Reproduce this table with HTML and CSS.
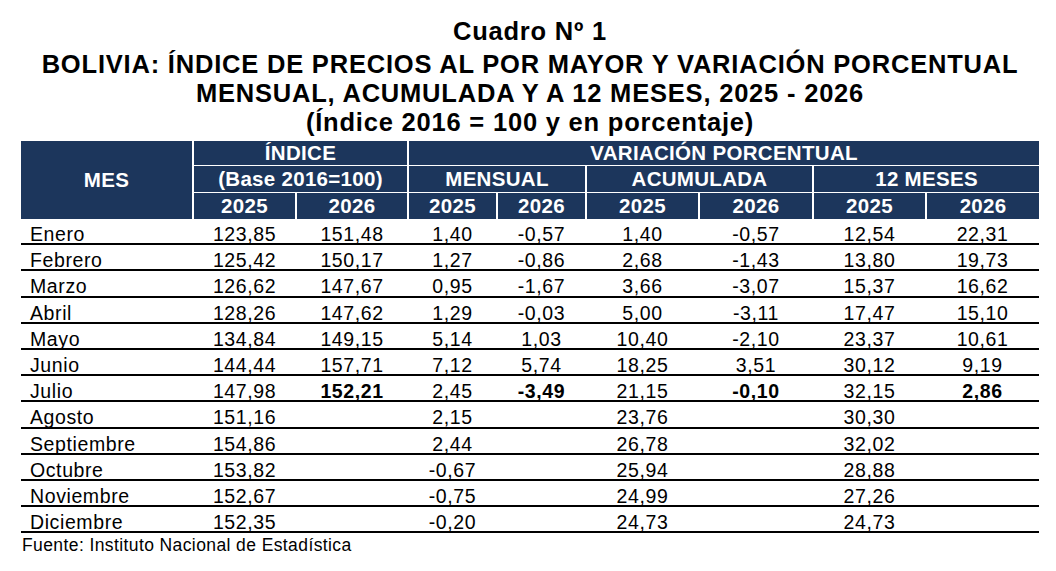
FILE: index.html
```html
<!DOCTYPE html>
<html lang="es">
<head>
<meta charset="utf-8">
<title>Cuadro Nº 1</title>
<link rel="stylesheet" href="styles.css">
</head>
<body>
<div class="page">
  <div class="title">
    <div class="t-line t-first">Cuadro Nº 1</div>
    <div class="t-line">BOLIVIA: ÍNDICE DE PRECIOS AL POR MAYOR Y VARIACIÓN PORCENTUAL</div>
    <div class="t-line">MENSUAL, ACUMULADA Y A 12 MESES, 2025 - 2026</div>
    <div class="t-line">(Índice 2016 = 100 y en porcentaje)</div>
  </div>
  <table class="ipm">
    <colgroup>
      <col class="c-mes"><col class="c-i25"><col class="c-i26">
      <col class="c-m"><col class="c-m">
      <col class="c-a25"><col class="c-a26">
      <col class="c-y"><col class="c-y">
    </colgroup>
    <thead>
      <tr class="h1">
        <th rowspan="3" class="h-mes">MES</th>
        <th colspan="2">ÍNDICE</th>
        <th colspan="6">VARIACIÓN PORCENTUAL</th>
      </tr>
      <tr class="h2">
        <th colspan="2">(Base 2016=100)</th>
        <th colspan="2">MENSUAL</th>
        <th colspan="2">ACUMULADA</th>
        <th colspan="2">12 MESES</th>
      </tr>
      <tr class="h3">
        <th>2025</th><th>2026</th><th>2025</th><th>2026</th><th>2025</th><th>2026</th><th>2025</th><th>2026</th>
      </tr>
    </thead>
    <tbody>
      <tr><td class="mes">Enero</td><td>123,85</td><td>151,48</td><td>1,40</td><td>-0,57</td><td>1,40</td><td>-0,57</td><td>12,54</td><td>22,31</td></tr>
      <tr><td class="mes">Febrero</td><td>125,42</td><td>150,17</td><td>1,27</td><td>-0,86</td><td>2,68</td><td>-1,43</td><td>13,80</td><td>19,73</td></tr>
      <tr><td class="mes">Marzo</td><td>126,62</td><td>147,67</td><td>0,95</td><td>-1,67</td><td>3,66</td><td>-3,07</td><td>15,37</td><td>16,62</td></tr>
      <tr><td class="mes">Abril</td><td>128,26</td><td>147,62</td><td>1,29</td><td>-0,03</td><td>5,00</td><td>-3,11</td><td>17,47</td><td>15,10</td></tr>
      <tr><td class="mes">Mayo</td><td>134,84</td><td>149,15</td><td>5,14</td><td>1,03</td><td>10,40</td><td>-2,10</td><td>23,37</td><td>10,61</td></tr>
      <tr><td class="mes">Junio</td><td>144,44</td><td>157,71</td><td>7,12</td><td>5,74</td><td>18,25</td><td>3,51</td><td>30,12</td><td>9,19</td></tr>
      <tr><td class="mes">Julio</td><td>147,98</td><td class="b">152,21</td><td>2,45</td><td class="b">-3,49</td><td>21,15</td><td class="b">-0,10</td><td>32,15</td><td class="b">2,86</td></tr>
      <tr><td class="mes">Agosto</td><td>151,16</td><td></td><td>2,15</td><td></td><td>23,76</td><td></td><td>30,30</td><td></td></tr>
      <tr><td class="mes">Septiembre</td><td>154,86</td><td></td><td>2,44</td><td></td><td>26,78</td><td></td><td>32,02</td><td></td></tr>
      <tr><td class="mes">Octubre</td><td>153,82</td><td></td><td>-0,67</td><td></td><td>25,94</td><td></td><td>28,88</td><td></td></tr>
      <tr><td class="mes">Noviembre</td><td>152,67</td><td></td><td>-0,75</td><td></td><td>24,99</td><td></td><td>27,26</td><td></td></tr>
      <tr><td class="mes">Diciembre</td><td>152,35</td><td></td><td>-0,20</td><td></td><td>24,73</td><td></td><td>24,73</td><td></td></tr>
    </tbody>
  </table>
  <div class="source">Fuente: Instituto Nacional de Estadística</div>
</div>
</body>
</html>
```

FILE: styles.css
```css
html, body {
  margin: 0;
  padding: 0;
  background: #ffffff;
}

body {
  font-family: "Liberation Sans", Arial, sans-serif;
  color: #000000;
  width: 1056px;
  height: 571px;
  overflow: hidden;
}

.page {
  padding-left: 21px;
  width: 1018px;
}

.title {
  padding-top: 17px;
  margin-bottom: 4px;
  text-align: center;
  font-weight: bold;
  font-size: 25.5px;
  letter-spacing: 0.8px;
}

.t-line {
  line-height: 29px;
  white-space: nowrap;
}

.t-first {
  margin-bottom: 4px;
}

.ipm {
  border-collapse: collapse;
  table-layout: fixed;
  width: 1018px;
}

.c-mes { width: 172px; }
.c-i25 { width: 103px; }
.c-i26 { width: 112px; }
.c-m   { width: 89px; }
.c-a25 { width: 113px; }
.c-a26 { width: 114px; }
.c-y   { width: 113px; }

.ipm th {
  background: #1c365c;
  color: #ffffff;
  font-weight: bold;
  font-size: 20.5px;
  letter-spacing: 0.3px;
  padding: 0;
  border-left: 2px solid #ffffff;
  border-right: 2px solid #ffffff;
  border-top: 1px solid #ffffff;
  border-bottom: 1px solid #ffffff;
  text-align: center;
  white-space: nowrap;
}

.ipm .h1 th {
  border-top: none;
  height: 24px;
  line-height: 22px;
}

.ipm .h2 th {
  height: 26px;
  line-height: 24px;
}

.ipm .h3 th {
  height: 26px;
  line-height: 24px;
  border-bottom: none;
}

.ipm .h-mes {
  border-left: none;
  border-bottom: none;
}

.ipm .h1 th:last-child,
.ipm .h2 th:last-child,
.ipm .h3 th:last-child {
  border-right: none;
}

.ipm td {
  font-size: 19.5px;
  letter-spacing: 0.6px;
  padding: 7px 0 0 0;
  line-height: 17.2px;
  text-align: center;
  border-bottom: 2px solid #000000;
  white-space: nowrap;
}

.ipm td.mes {
  text-align: left;
  padding-left: 9px;
}

.ipm td.b {
  font-weight: bold;
}

.source {
  margin-top: 2px;
  font-size: 17.5px;
  letter-spacing: 0.4px;
  line-height: 20px;
  padding-left: 1px;
}
```
